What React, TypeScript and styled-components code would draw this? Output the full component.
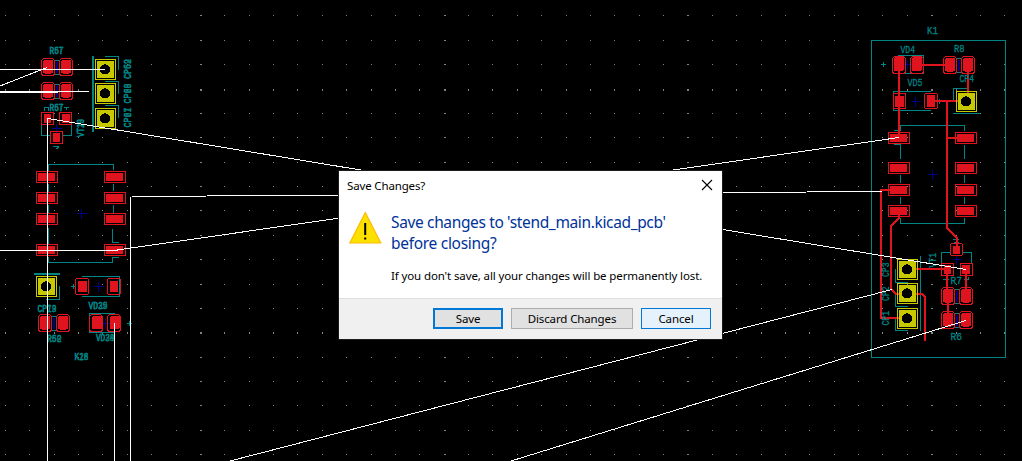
import React from "react";
import styled, { createGlobalStyle } from "styled-components";

const TEAL = "#008484";
const RED = "#e0141e";
const BLUE = "#000084";
const YELLOW = "#c8c800";

const GlobalStyle = createGlobalStyle`
  * { box-sizing: border-box; }
  body { margin: 0; background: #000; overflow: hidden; }
`;

const Workspace = styled.main`
  position: relative;
  width: 1022px;
  height: 461px;
  overflow: hidden;
  background: #000;
`;

const Board = styled.svg`
  display: block;
  width: 1022px;
  height: 461px;
  shape-rendering: crispEdges;
`;

const Silk = styled.path`
  fill: none;
  stroke: ${TEAL};
`;

const Track = styled.path`
  fill: none;
  stroke: ${RED};
  stroke-width: 2;
`;

const Ratsnest = styled.path`
  fill: none;
  stroke: #fff;
`;

const Origin = styled.path`
  fill: none;
  stroke: ${BLUE};
`;

const SilkText = styled.text`
  font-family: "Liberation Mono", monospace;
  font-size: 10.5px;
  fill: ${TEAL};
  stroke: ${TEAL};
  stroke-width: 0.3px;
`;

/* ---------- board primitives ---------- */

type Box = [number, number, number, number];

function Pad({ o, i, r = 2 }: { o: Box; i: Box; r?: number }) {
  return (
    <g>
      <rect x={o[0]} y={o[1]} width={o[2] - o[0]} height={o[3] - o[1]} rx={r} fill="none" stroke={RED} />
      <rect x={i[0]} y={i[1]} width={i[2] - i[0]} height={i[3] - i[1]} rx={r > 2 ? 2 : 0} fill={RED} />
    </g>
  );
}

function SquarePad({ x, y }: { x: number; y: number }) {
  return (
    <g>
      <rect x={x - 9.5} y={y - 9.5} width={20} height={20} fill="none" stroke={YELLOW} />
      <rect x={x - 8} y={y - 8} width={17} height={17} fill={YELLOW} />
      <circle cx={x} cy={y + 0.5} r={5.1} fill="#000" />
    </g>
  );
}

function Cross({ x, y, s = 5 }: { x: number; y: number; s?: number }) {
  return <Origin d={`M${x - s} ${y}H${x + s}M${x} ${y - s}V${y + s}`} />;
}

function Plus({ x, y }: { x: number; y: number }) {
  return <Silk d={`M${x - 2.5} ${y}h5M${x} ${y - 2.5}v5`} />;
}

function Resistor({ x, y }: { x: number; y: number }) {
  return (
    <g>
      <Silk d={`M${x + 13} ${y + 1.5}h5M${x + 13} ${y + 15.5}h5`} />
      <Origin d={`M${x + 15} ${y + 3}v11M${x + 16} ${y + 3}v11`} />
      <Pad o={[x, y, x + 13, y + 17]} i={[x + 1.5, y + 1.5, x + 11.5, y + 15]} r={3} />
      <Pad o={[x + 18, y, x + 31, y + 17]} i={[x + 19.5, y + 1.5, x + 29.5, y + 15]} r={3} />
    </g>
  );
}

function Label({ x, y, w, t, up }: { x: number; y: number; w: number; t: string[]; up?: boolean }) {
  return (
    <>
      {t.map((s) => (
        <SilkText
          key={s}
          x={x}
          y={y}
          textLength={w}
          lengthAdjust="spacingAndGlyphs"
          transform={up ? `rotate(-90 ${x} ${y})` : undefined}
        >
          {s}
        </SilkText>
      ))}
    </>
  );
}

function Grid() {
  const dots: React.ReactNode[] = [];
  for (let r = 0; r < 19; r++) {
    for (let c = 0; c < 42; c++) {
      dots.push(
        <rect
          key={`${r}-${c}`}
          x={Math.floor(5.4 + c * 24.375)}
          y={Math.floor(15.9 + r * 24.375)}
          width={c % 10 === 8 ? 2 : 1}
          height={r % 10 === 3 ? 2 : 1}
          fill="#848484"
        />
      );
    }
  }
  return <g>{dots}</g>;
}

function ChipPads({ x, rows }: { x: number; rows: number[] }) {
  return (
    <>
      {rows.map((y) => (
        <Pad key={y} o={[x, y, x + 21, y + 11]} i={[x + 1.5, y + 1.5, x + 18.5, y + 9.5]} r={1} />
      ))}
    </>
  );
}

function LeftModules() {
  return (
    <g>
      <rect x={92} y={56} width={2} height={76} fill={TEAL} />
      <Silk d="M105 56.5H118.5V70M105 81.5H118.5V94M105 105.5H118.5V118" />
      <Silk d="M41.5 125V135.5H51M71.5 125V135.5H62" />
      <Silk d="M44 110.5v-3h4v3M64 107.5h5M66.5 110v-3M53 146.5h6M56 149l3-2" />
      <Resistor x={41.5} y={58.5} />
      <Resistor x={41.5} y={82.5} />
      <Cross x={56.5} y={128.5} />
      <Pad o={[41.5, 112.5, 53.5, 124.5]} i={[44, 114, 51, 123]} r={1} />
      <Pad o={[59.5, 112.5, 71.5, 124.5]} i={[62, 114, 70, 123]} r={1} />
      <Pad o={[50.5, 131.5, 62.5, 143.5]} i={[53, 133, 60, 142]} r={1} />
      <SquarePad x={105} y={69} />
      <SquarePad x={105} y={93} />
      <SquarePad x={105} y={118} />
      <Label x={49.5} y={54} w={14} t={["R67", "R5T"]} />
      <Label x={49.5} y={110.5} w={14} t={["R67", "R5T"]} />
      <Label x={84} y={137} w={18} t={["VT20", "VT13"]} up />
      <Label x={131} y={79} w={20} t={["CP69", "CP52"]} up />
      <Label x={131} y={103.5} w={20} t={["CP68", "CP20"]} up />
      <Label x={131} y={127.5} w={20} t={["CP67", "CP21"]} up />

      <Silk d="M48.5 171V164.5H113.5V170M48.5 184V192M48.5 205V213M48.5 228V244M48.5 257V262.5H112.5V257.5H119M113.5 184V191M113.5 205V213M112.5 229V242.5H119" />
      <ChipPads x={36.5} rows={[171.5, 192.5, 213.5, 244.5]} />
      <ChipPads x={104.5} rows={[171.5, 192.5, 213.5, 244.5]} />
      <Cross x={81.5} y={213.5} />

      <rect x={34} y={273} width={26} height={2} fill={TEAL} />
      <Silk d="M59.5 286V299.5H46M82 276.5H119.5V296.5H82" />
      <SquarePad x={46} y={286} />
      <Plus x={73.5} y={286.5} />
      <Plus x={129.5} y={323.5} />
      <Pad o={[75.5, 278.5, 88.5, 294.5]} i={[78, 281, 87, 292]} />
      <Pad o={[107.5, 278.5, 120.5, 294.5]} i={[110, 281, 118, 292]} />
      <Cross x={98.5} y={286.5} />
      <Label x={37.5} y={312} w={19} t={["CP73", "CP19"]} />
      <Label x={88.5} y={309} w={19} t={["VD25", "VD39"]} />
      <Resistor x={38.5} y={314.5} />
      <Silk d="M114.5 313.5H89.5V332.5H114.5" />
      <Cross x={105.5} y={323.5} />
      <Pad o={[89.5, 314.5, 102.5, 331.5]} i={[92, 316, 103, 329]} r={3} />
      <Pad o={[107.5, 314.5, 120.5, 331.5]} i={[110, 316, 120, 329]} r={3} />
      <Label x={47} y={342} w={14.5} t={["R60", "R52"]} />
      <Label x={96} y={341} w={18.5} t={["VD24", "VD38"]} />
      <Label x={74.5} y={360} w={14} t={["K26", "K18"]} />
    </g>
  );
}

function ModuleK1() {
  return (
    <g>
      <Silk d="M871.5 40.5H1005.5V357.5H871.5Z" />
      <Label x={927} y={34} w={11} t={["K1"]} />
      <Label x={900.5} y={53} w={14.5} t={["VD4"]} />
      <Label x={954} y={52} w={10.5} t={["R8"]} />
      <Label x={907.5} y={85.5} w={15} t={["VD5"]} />
      <Silk d="M898 55.5H923.5V73.5H898M931 91.5H893.5V110.5H931M953.5 100V88.5H968M953 113.5H980" />
      <Plus x={883.5} y={64.5} />
      <Plus x={939.5} y={101.5} />
      <Cross x={907.5} y={64.5} />
      <Pad o={[892.5, 56.5, 905.5, 73.5]} i={[894, 57, 904, 71]} r={3} />
      <Pad o={[910.5, 56.5, 923.5, 73.5]} i={[912, 57, 922, 71]} r={3} />
      <Resistor x={943.5} y={56.5} />
      <Pad o={[893.5, 93.5, 905.5, 108.5]} i={[895, 96, 904, 107]} r={1} />
      <Pad o={[924.5, 93.5, 937.5, 108.5]} i={[927, 95, 935, 107]} />
      <Cross x={915.5} y={101.5} />

      <Silk d="M894 130.5H900.5V125.5H964.5V131M894 144.5H900.5V159M900.5 175V183M900.5 197V204M900.5 218V223.5H964.5V218M964.5 145V159M964.5 175V183M964.5 197V204" />
      <ChipPads x={888.5} rows={[132.5, 162.5, 184.5, 205.5]} />
      <ChipPads x={955.5} rows={[132.5, 162.5, 184.5, 205.5]} />
      <Cross x={932.5} y={174.5} />

      <Silk d="M895.5 269V282.5H908M895.5 293V306.5H908M895.5 318V330.5H908M920.5 256V331" />
      <Silk d="M951 252.5H941.5V264M962 252.5H971.5V264M953 239.5h6M954 242.5h5M943 279.5h6M946 277v3M964 279.5h4v-3" />
      <Cross x={956.5} y={259.5} />
      <Pad o={[950.5, 243.5, 962.5, 255.5]} i={[953, 246, 960, 254]} />
      <Pad o={[941.5, 263.5, 953.5, 275.5]} i={[944, 265, 951, 274]} r={1} />
      <Pad o={[960.5, 263.5, 972.5, 275.5]} i={[962, 265, 970, 274]} r={1} />
      <Resistor x={941.5} y={287.5} />
      <Resistor x={941.5} y={311.5} />

      <Track d="M912 65H946M899 65V137M968 68V101M935 101H960M947 101V228L957 238V250M947 138H958" />
      <Track d="M891 190H881V318H900M899 210V218L891 226V289L896 294H900M915 269H947V294M966 269V294M948 296V318M915 294H922L925 297V341" />
      <Label x={959.5} y={82} w={14.5} t={["CP4"]} />
      <Label x={889} y={277} w={14.5} t={["CP3"]} up />
      <Label x={889} y={301} w={14.5} t={["CP2"]} up />
      <Label x={889} y={325.5} w={14.5} t={["CP1"]} up />
      <Label x={936} y={267.5} w={14.5} t={["VT1"]} up />
      <Label x={950.5} y={284} w={11.5} t={["R7"]} />
      <Label x={950.5} y={340} w={11.5} t={["R6"]} />
      <SquarePad x={966} y={101} />
      <SquarePad x={907} y={269} />
      <SquarePad x={907} y={293} />
      <SquarePad x={907} y={318} />
    </g>
  );
}

/* ---------- dialog ---------- */

const Dialog = styled.section`
  position: absolute;
  left: 338px;
  top: 170px;
  width: 385px;
  height: 170px;
  display: flex;
  flex-direction: column;
  border: 1px solid #1c1c1c;
  background: #fff;
  color: #000;
  font-family: "Noto Sans", "Open Sans", sans-serif;
  font-size: 12px;
`;

const TitleBar = styled.header`
  height: 28px;
  padding: 0 9px 0 8px;
  display: flex;
  align-items: center;
  justify-content: space-between;
`;

const Phrase = styled.span<{ $size: number; $track: number }>`
  font-size: ${(p) => p.$size}px;
  letter-spacing: ${(p) => p.$track}px;
  white-space: nowrap;
`;

const CloseIcon = styled.svg`
  width: 12px;
  height: 12px;
`;

const Content = styled.div`
  flex: 1;
  display: flex;
  gap: 9px;
  padding: 12px 10px 0;
`;

const WarningIcon = styled.svg`
  width: 33px;
  height: 34px;
  flex: none;
`;

const Message = styled.div`
  display: flex;
  flex-direction: column;
  padding-top: 1px;
`;

const Heading = styled.h1`
  margin: 0;
  color: #003399;
  font-weight: 400;
  line-height: 21px;
  display: flex;
  flex-direction: column;
`;

const Detail = styled.p`
  margin: 13px 0 0;
  line-height: 18px;
`;

const Footer = styled.footer`
  height: 41px;
  display: flex;
  justify-content: flex-end;
  gap: 8px;
  padding: 9px 11px 0 0;
  border-top: 1px solid #dfdfdf;
  background: #f0f0f0;
`;

const looks = {
  focus: { border: "2px solid #0078d7", bg: "#e1e1e1" },
  plain: { border: "1px solid #adadad", bg: "#e1e1e1" },
  hover: { border: "1px solid #0078d7", bg: "#e5f1fb" },
};

const Button = styled.button<{ $look: keyof typeof looks; $w: number }>`
  width: ${(p) => p.$w}px;
  height: 21px;
  padding: 0;
  display: flex;
  align-items: center;
  justify-content: center;
  border: ${(p) => looks[p.$look].border};
  border-radius: 0;
  background: ${(p) => looks[p.$look].bg};
  color: #000;
  font-family: inherit;
  line-height: 17px;
`;

export default function App() {
  return (
    <Workspace>
      <GlobalStyle />
      <Board viewBox="0 0 1022 461">
        <Grid />
        <LeftModules />
        <ModuleK1 />
        <Ratsnest d="M0 69.5H105M0 86L47 67.5M0 92.5H58M0 91.5H89M47.5 461V118.5L966 269.5M0 250.5H114L899 137.5M130.5 461V197M132 196.5L882 191.5M114.5 323V461M230 461L892 289.5M511 461L966 320.5" />
      </Board>
      <Dialog role="dialog">
        <TitleBar>
          <Phrase $size={11.5} $track={-0.15}>Save Changes?</Phrase>
          <CloseIcon viewBox="0 0 12 12">
            <path d="M1 1L11 11M11 1L1 11" stroke="#000" strokeWidth="1.1" />
          </CloseIcon>
        </TitleBar>
        <Content>
          <WarningIcon viewBox="0 0 33 34">
            <path d="M16.3 1.5L31.8 32H.8Z" fill="#fce100" stroke="#ffb900" strokeWidth="1.2" />
            <path d="M16.2 12V24M16.2 26.5V28.5" stroke="#000" strokeWidth="2" />
          </WarningIcon>
          <Message>
            <Heading>
              <Phrase $size={15.5} $track={-0.36}>Save changes to 'stend_main.kicad_pcb'</Phrase>
              <Phrase $size={15.5} $track={-0.3}>before closing?</Phrase>
            </Heading>
            <Detail>
              <Phrase $size={11.5} $track={-0.12}>
                If you don't save, all your changes will be permanently lost.
              </Phrase>
            </Detail>
          </Message>
        </Content>
        <Footer>
          <Button $look="focus" $w={70}><Phrase $size={11.5} $track={-0.12}>Save</Phrase></Button>
          <Button $look="plain" $w={122}><Phrase $size={11.5} $track={-0.12}>Discard Changes</Phrase></Button>
          <Button $look="hover" $w={70}><Phrase $size={11.5} $track={-0.12}>Cancel</Phrase></Button>
        </Footer>
      </Dialog>
    </Workspace>
  );
}
